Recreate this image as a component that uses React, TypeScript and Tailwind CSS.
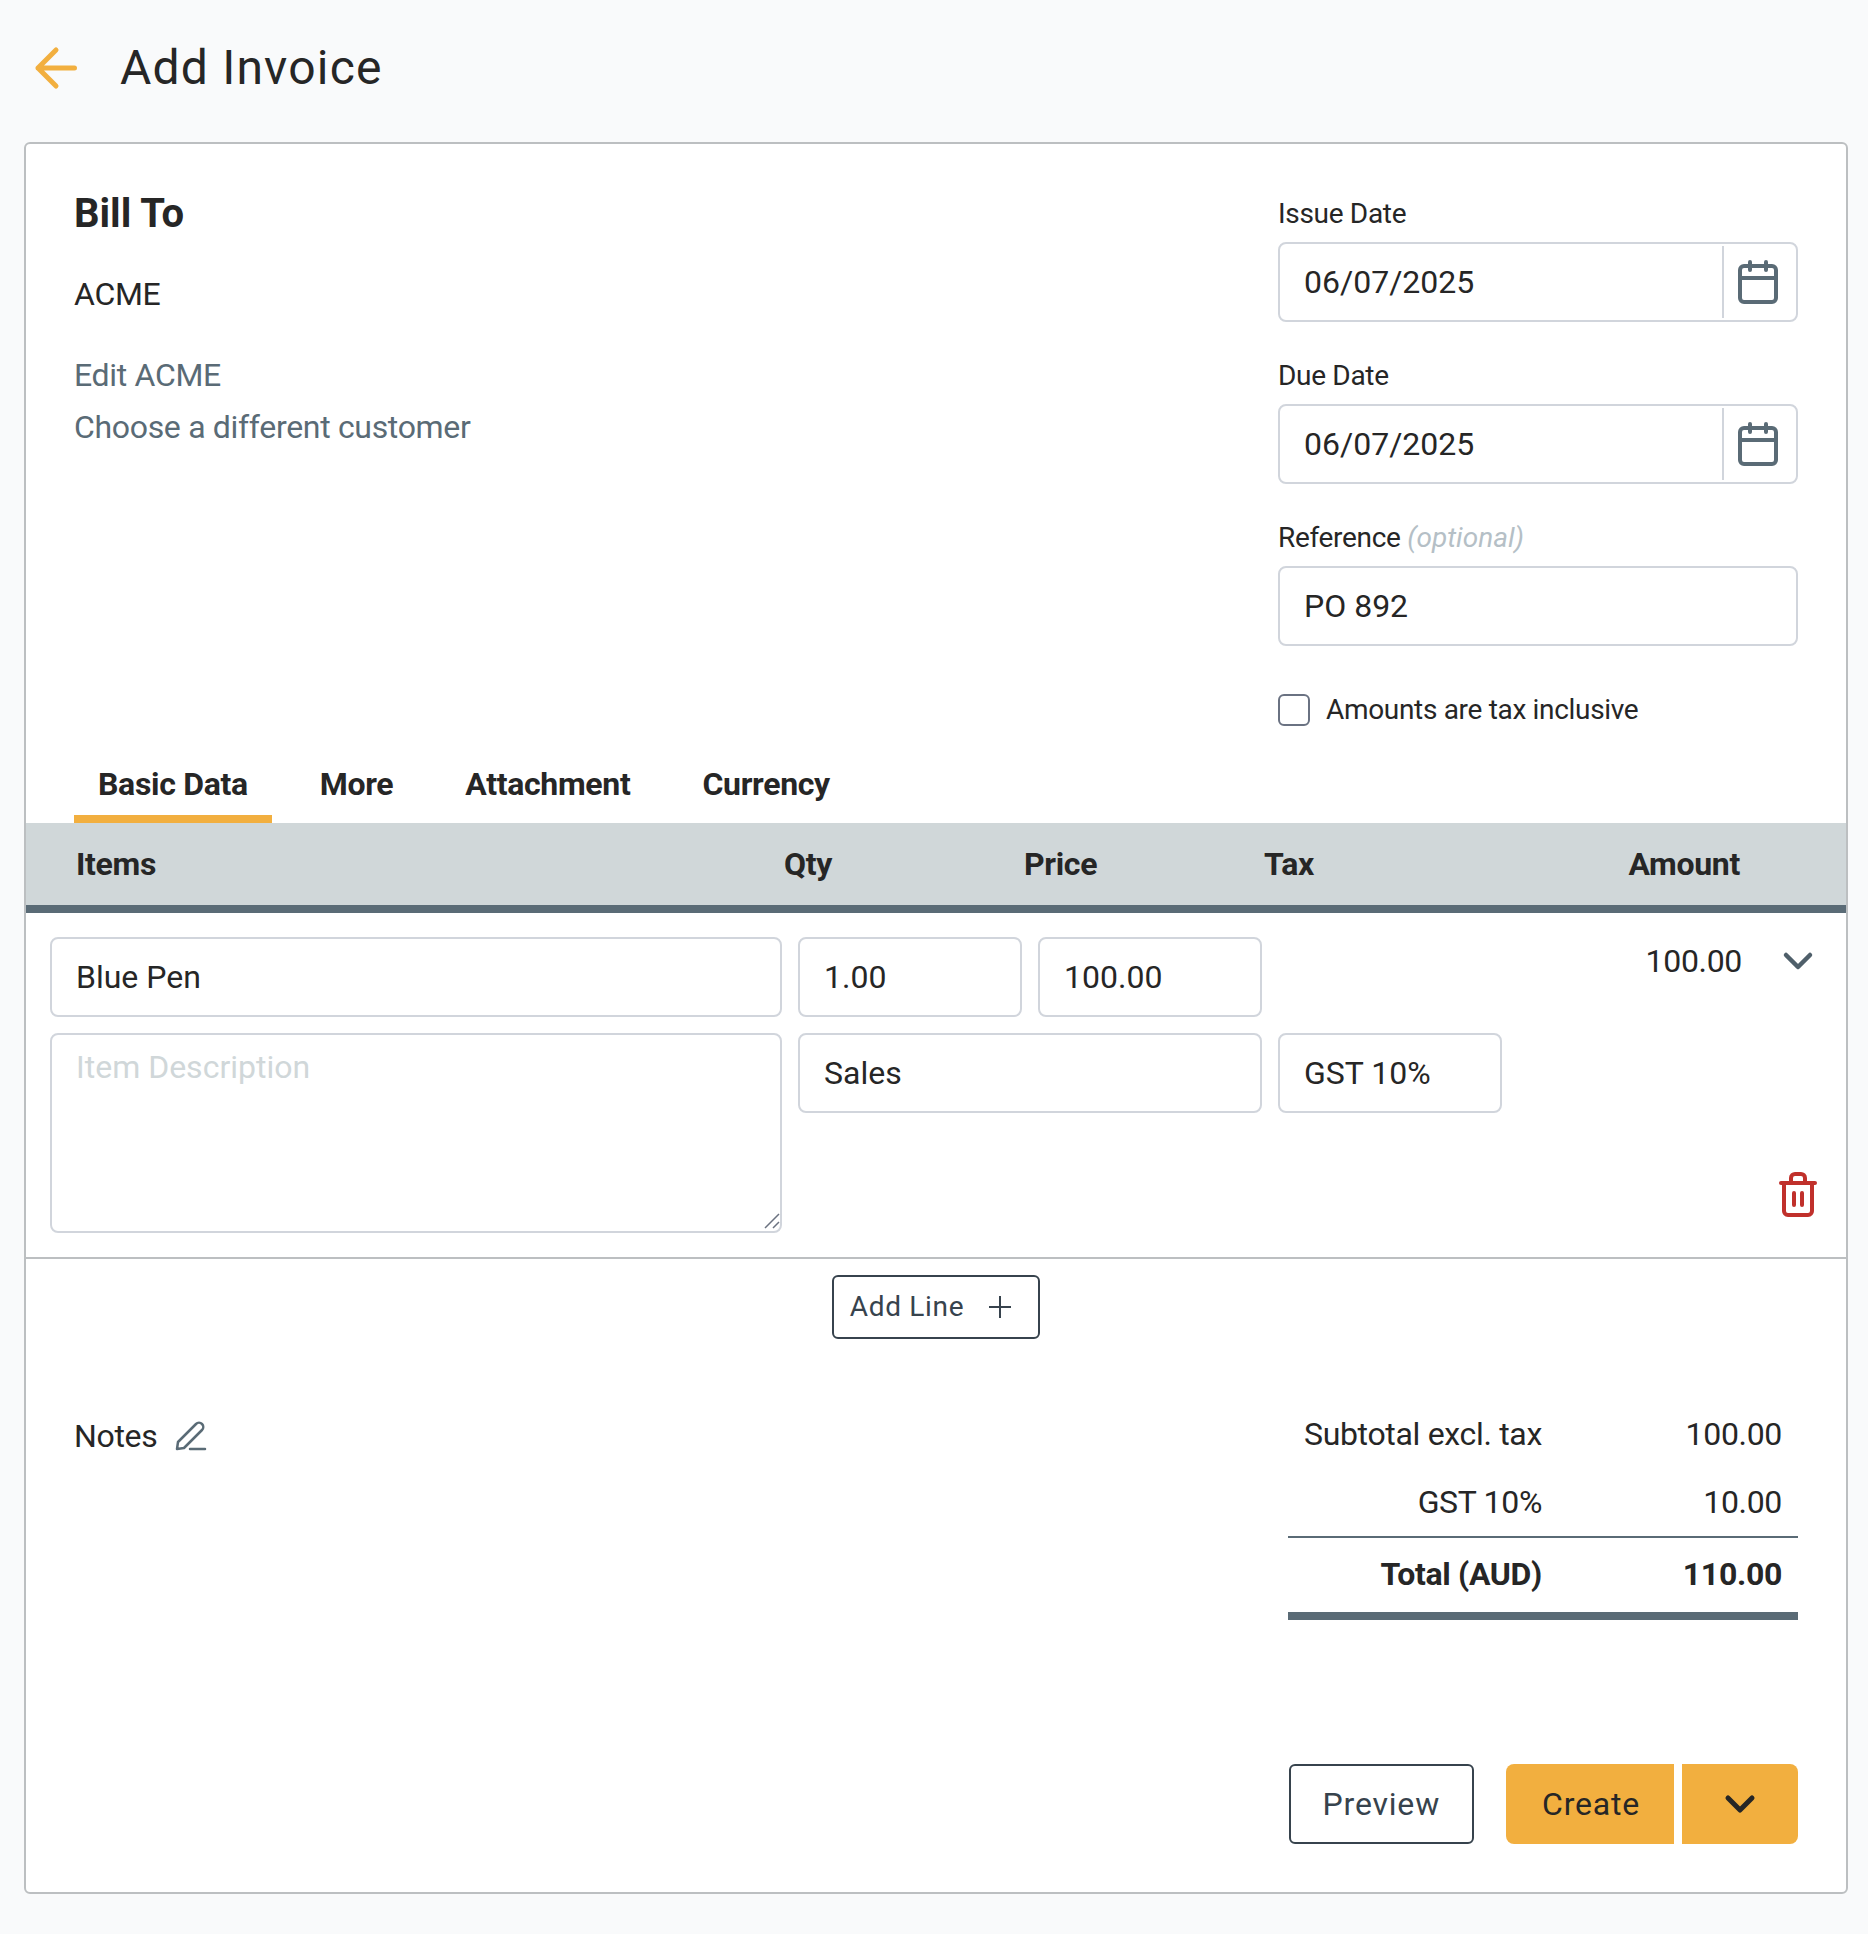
import React from 'react';
import { ChevronDown } from 'lucide-react';

const inputClasses = 'h-20 w-full rounded-lg border-2 border-gray-300 bg-white px-6 tracking-normal text-neutral-800 outline-none';

const CalendarIcon = () => (
  <svg viewBox="0 0 40 44" className="h-11 w-10" fill="none" stroke="#5a6b76" strokeWidth="4">
    <rect x="2" y="6" width="36" height="36" rx="4" />
    <path d="M2 18h36" />
    <path d="M12 2v8M28 2v8" strokeLinecap="round" />
  </svg>
);

const DateField = ({ label, value }: { label: string; value: string }) => (
  <div className="mb-8">
    <label className="mb-2 block pt-0.5 text-[28px] leading-10 text-neutral-800">{label}</label>
    <div className="flex h-20 items-center rounded-lg border-2 border-gray-300 bg-white">
      <input readOnly defaultValue={value} className="h-full min-w-0 flex-1 rounded-lg bg-transparent px-6 tracking-normal text-neutral-800 outline-none" />
      <div className="h-18 w-0.5 bg-gray-300" />
      <div className="flex w-18 justify-center pr-1">
        <CalendarIcon />
      </div>
    </div>
  </div>
);

const PencilIcon = () => (
  <svg viewBox="0 0 32 32" className="h-8 w-8" fill="none" stroke="#5a6b76" strokeWidth="2.5" strokeLinecap="round" strokeLinejoin="round">
    <path d="M2 29l1-7L21 4a4.200 4.200 0 0 1 6 6L9 28l-7 1z" />
    <path d="M15 29h15" />
  </svg>
);

const TrashIcon = () => (
  <svg viewBox="0 0 38 46" className="h-11.5 w-9.5" fill="none" stroke="#c0302b" strokeWidth="4" strokeLinecap="round" strokeLinejoin="round">
    <path d="M2 12h34" />
    <path d="M12 11V7c0-2.500 2-4 4-4h6c2 0 4 1.500 4 4v4" />
    <path d="M5 12v28c0 2 1.500 4 4 4h20c2.500 0 4-2 4-4V12" />
    <path d="M15 22v12M23 22v12" />
  </svg>
);

const App = () => {
  return (
    <div className="min-h-screen bg-gray-50 pt-10.5 pb-10 font-['Roboto',sans-serif] text-[32px] tracking-[-0.01em] text-neutral-800">
      <div className="mb-12 flex h-13 items-center gap-10 pl-8">
        <svg viewBox="0 0 48 48" className="h-12 w-12" fill="none" stroke="#f2af3f" strokeWidth="5" strokeLinecap="round" strokeLinejoin="round">
          <path d="M42.500 24H6M24 6L6 24l18 18" />
        </svg>
        <h1 className="text-5xl leading-13 tracking-wide">Add Invoice</h1>
      </div>

      <div className="ml-6 mr-5 rounded-md border-2 border-[#bcbfc1] bg-white pb-12">
        {/* Bill to + dates */}
        <div className="flex justify-between px-12 pt-12">
          <div className="pt-0.5">
            <h2 className="text-[40px] font-bold leading-10 tracking-normal">Bill To</h2>
            <p className="mt-10 leading-10">ACME</p>
            <p className="mt-10.25 leading-10 text-[#5a6b76]">Edit ACME</p>
            <p className="mt-3 leading-10 text-[#5a6b76]">Choose a different customer</p>
          </div>
          <div className="w-[520px]">
            <DateField label="Issue Date" value="06/07/2025" />
            <DateField label="Due Date" value="06/07/2025" />
            <div>
              <label className="mb-2 block pt-0.5 text-[28px] leading-10">
                Reference <span className="italic tracking-normal text-[#b5bfc6]">(optional)</span>
              </label>
              <input readOnly defaultValue="PO 892" className={inputClasses} />
            </div>
            <div className="mt-12 flex items-center gap-4">
              <span className="h-8 w-8 rounded-md border-2 border-gray-500 bg-white" />
              <span className="text-[28px] leading-8">Amounts are tax inclusive</span>
            </div>
          </div>
        </div>

        {/* Tabs */}
        <div className="mt-9.5 flex gap-6 px-12 font-bold leading-10">
          <div className="border-b-8 border-[#f2af3f] px-6 pb-2.75">Basic Data</div>
          <div className="border-b-8 border-transparent px-6 pb-2.75">More</div>
          <div className="border-b-8 border-transparent px-6 pb-2.75">Attachment</div>
          <div className="border-b-8 border-transparent px-6 pb-2.75">Currency</div>
        </div>

        {/* Line items */}
        <div className="grid h-[90px] grid-cols-[708px_240px_240px_1fr_auto] items-center border-b-8 border-[#5a6b76] bg-[#d0d7d9] pl-12.5 pr-26.5 font-bold">
          <div>Items</div>
          <div>Qty</div>
          <div>Price</div>
          <div>Tax</div>
          <div>Amount</div>
        </div>

        <div className="grid grid-cols-[732px_224px_224px_224px_1fr_48px] gap-4 border-b-2 border-[#bcbfc1] p-6">
          <input readOnly defaultValue="Blue Pen" className={inputClasses} />
          <input readOnly defaultValue="1.00" className={inputClasses} />
          <input readOnly defaultValue="100.00" className={inputClasses} />
          <div />
          <div className="pr-4 pt-1 text-right leading-10">100.00</div>
          <div className="flex justify-center">
            <ChevronDown className="h-12 w-12 text-[#4f5f6a]" strokeWidth={2.25} />
          </div>

          <div className="relative h-50">
            <textarea readOnly placeholder="Item Description" className="h-full w-full resize-none rounded-lg border-2 border-gray-300 bg-white px-6 py-2 tracking-normal outline-none placeholder:text-[#d0d7d9]" />
            <svg viewBox="0 0 16 16" className="absolute bottom-1 right-0.5 h-4 w-4" fill="none" stroke="#6b7280" strokeWidth="1.500">
              <path d="M1 15L15 1M9 15l6-6" />
            </svg>
          </div>
          <input readOnly defaultValue="Sales" className={`${inputClasses} col-span-2`} />
          <input readOnly defaultValue="GST 10%" className={inputClasses} />
          <div />
          <div className="flex items-end justify-center pb-4">
            <TrashIcon />
          </div>
        </div>

        <div className="mt-4 flex justify-center">
          <button className="flex h-16 items-center gap-6 rounded-md border-2 border-[#37434d] pl-4 pr-6.5 text-[28px] tracking-wide text-[#37434d]">
            Add Line
            <svg viewBox="0 0 24 24" className="h-6 w-6" fill="none" stroke="currentColor" strokeWidth="2">
              <path d="M12 1v22M1 12h22" />
            </svg>
          </button>
        </div>

        {/* Notes + totals */}
        <div className="mt-15.25 flex justify-between px-12">
          <div className="mt-4 flex h-10 items-center gap-4.5">
            <span>Notes</span>
            <PencilIcon />
          </div>
          <div className="w-[510px]">
            <div className="grid grid-cols-[1fr_240px] pr-4 leading-10">
              <div className="py-3.5 text-right">Subtotal excl. tax</div>
              <div className="py-3.5 text-right">100.00</div>
              <div className="py-3.5 text-right">GST 10%</div>
              <div className="py-3.5 text-right">10.00</div>
            </div>
            <div className="grid grid-cols-[1fr_240px] border-t-2 border-b-8 border-[#5a6b76] pr-4 pt-4 pb-4.5 font-bold leading-10">
              <div className="text-right">Total (AUD)</div>
              <div className="text-right">110.00</div>
            </div>
          </div>
        </div>

        {/* Actions */}
        <div className="mt-36 flex justify-end gap-8 px-12">
          <button className="h-20 rounded-md border-2 border-[#37434d] px-8 tracking-wide text-[#37434d]">Preview</button>
          <div className="flex gap-2">
            <button className="h-20 rounded-l-lg bg-[#f2af3f] pl-9 pr-8.5 tracking-wide">Create</button>
            <button className="flex h-20 w-[116px] items-center justify-center rounded-r-lg bg-[#f2af3f]">
              <ChevronDown className="h-12 w-12" strokeWidth={2.5} />
            </button>
          </div>
        </div>
      </div>
    </div>
  );
};

export default App;
